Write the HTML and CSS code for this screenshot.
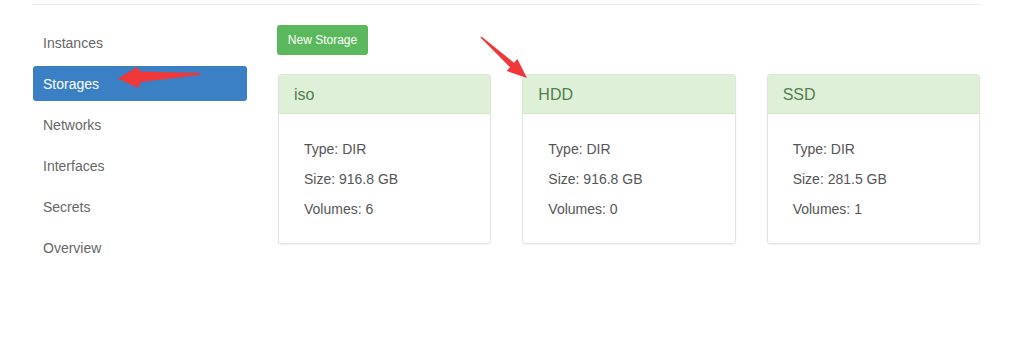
FILE: index.html
```html
<!DOCTYPE html>
<html lang="en">
<head>
  <meta charset="utf-8">
  <title>Storages</title>
  <meta name="viewport" content="width=device-width, initial-scale=1">
  <link rel="stylesheet" href="styles.css">
</head>
<body>
  <div class="page">
    <div class="layout">
      <ul class="side-nav">
        <li><a href="#">Instances</a></li>
        <li class="active"><a href="#">Storages</a></li>
        <li><a href="#">Networks</a></li>
        <li><a href="#">Interfaces</a></li>
        <li><a href="#">Secrets</a></li>
        <li><a href="#">Overview</a></li>
      </ul>
      <div class="main">
        <button class="btn-new">New Storage</button>
        <div class="pools">
          <div class="panel">
            <div class="panel-heading">iso</div>
            <div class="panel-body">
              <p>Type: DIR</p>
              <p>Size: 916.8 GB</p>
              <p>Volumes: 6</p>
            </div>
          </div>
          <div class="panel">
            <div class="panel-heading">HDD</div>
            <div class="panel-body">
              <p>Type: DIR</p>
              <p>Size: 916.8 GB</p>
              <p>Volumes: 0</p>
            </div>
          </div>
          <div class="panel">
            <div class="panel-heading">SSD</div>
            <div class="panel-body">
              <p>Type: DIR</p>
              <p>Size: 281.5 GB</p>
              <p>Volumes: 1</p>
            </div>
          </div>
        </div>
      </div>
    </div>
  </div>
  <!-- annotation arrows drawn over the screenshot -->
  <svg class="marks" width="1024" height="360" viewBox="0 0 1024 360">
    <polygon points="200,73 140,71.5 137,67 118,78.5 138,88 141,82 200,75" />
    <polygon points="481.5,36.5 514,62.8 517.4,59.1 527,78 506.6,70.9 510,67.2 480.5,37.5" />
  </svg>
</body>
</html>
```

FILE: styles.css
```css
*, *::before, *::after { box-sizing: border-box; }
html, body { margin: 0; padding: 0; }
body {
  font-family: "Liberation Sans", Arial, sans-serif;
  font-size: 14px; color: #555;
  background: #fff;
  padding-top: 4px;
  position: relative;
  height: 360px; overflow: hidden;
}
.page {
  margin-left: 32px; width: 948px;
  border-top: 1px solid #ebebeb;
}
.layout {
  display: flex; gap: 30px;
  padding: 20px 0 0 1px;
}
/* Sidebar pills */
.side-nav { list-style: none; margin: 0; padding: 0; width: 214px; flex: none; }
.side-nav li { margin-bottom: 6px; }
.side-nav a {
  display: block; padding: 9px 10px 8px; line-height: 18px;
  color: #666; text-decoration: none; border-radius: 3px;
}
.side-nav .active a { background: #3b7fc4; color: #fff; }
.main { flex: 1; }
.btn-new {
  font-family: inherit; font-size: 12px; line-height: 18px;
  padding: 6px 10px; border: 0; border-radius: 3px;
  background: #5cb85c; color: #fff; width: 91px;
}
.pools {
  display: grid; grid-template-columns: repeat(3, 1fr); gap: 31px;
  margin-top: 19px; padding-left: 1px;
}
.panel {
  border: 1px solid #dfe6dc; border-radius: 3px;
  box-shadow: 0 1px 2px rgba(0,0,0,0.06);
  background: #fff; overflow: hidden;
}
.panel-heading {
  background: #dff0d8; color: #527f4d;
  font-size: 16px; line-height: 19px; padding: 10px 15px 9px;
  border-bottom: 1px solid #d6e9c6;
}
.panel-body { padding: 25px 25px 24px 25px; }
.panel-body p { margin: 0 0 10px; line-height: 20px; }
.panel-body p:last-child { margin-bottom: 0; }
.marks { position: absolute; top: 0; left: 0; pointer-events: none; }
.marks polygon { fill: #f0383a; }
```
